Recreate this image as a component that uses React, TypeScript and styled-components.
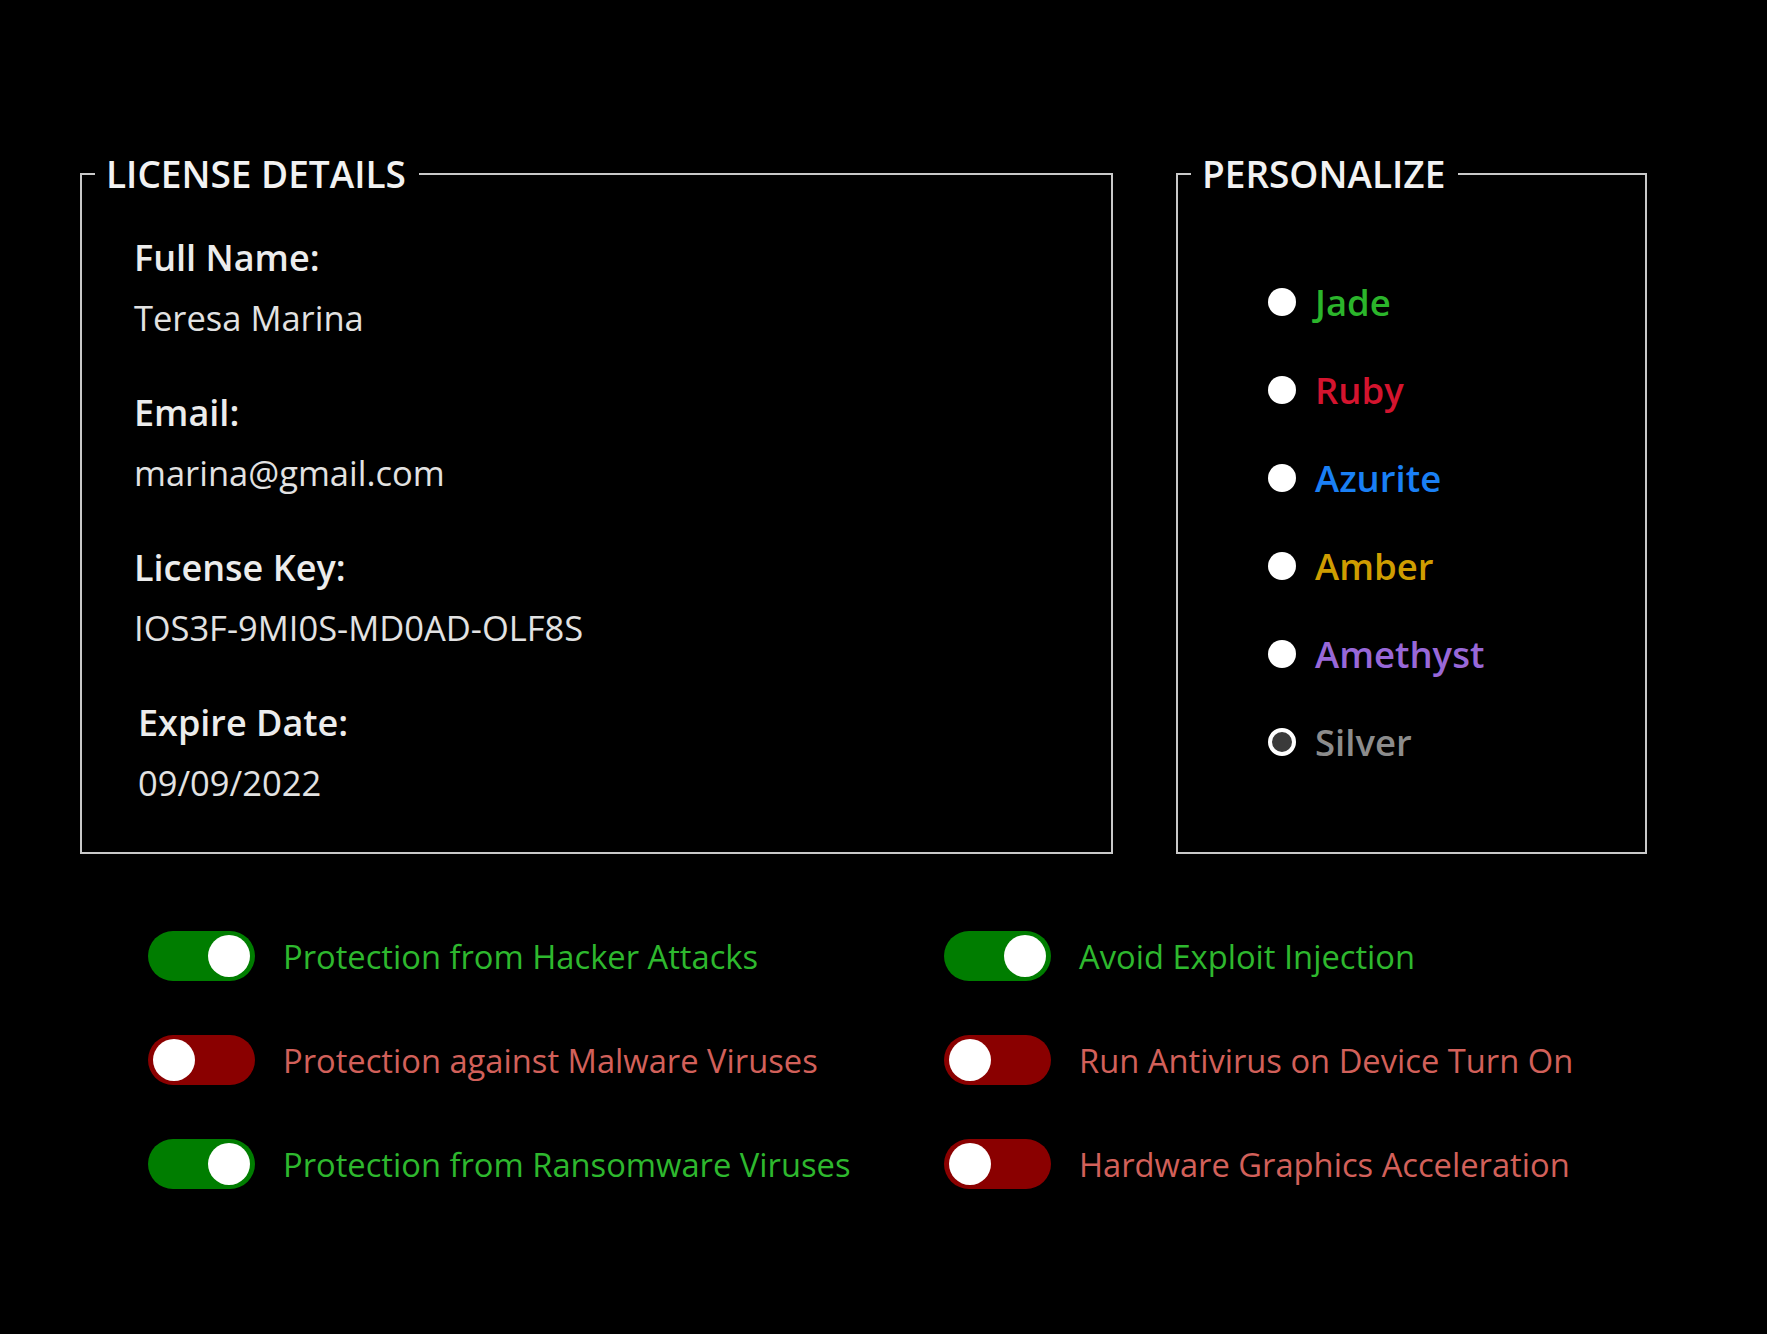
import styled, { createGlobalStyle } from 'styled-components';

const GlobalStyle = createGlobalStyle`
  html, body {
    margin: 0;
    padding: 0;
    background: #000;
  }

  body {
    font-family: 'Open Sans', 'Noto Sans', sans-serif;
    color: #e6e6e6;
  }
`;

const LICENSE_FIELDS = [
  { label: 'Full Name:', value: 'Teresa Marina' },
  { label: 'Email:', value: 'marina@gmail.com' },
  { label: 'License Key:', value: 'IOS3F-9MI0S-MD0AD-OLF8S' },
  { label: 'Expire Date:', value: '09/09/2022', shifted: true },
];

const THEMES = [
  { name: 'Jade', color: '#2bb52b' },
  { name: 'Ruby', color: '#d4142e' },
  { name: 'Azurite', color: '#1a80f5' },
  { name: 'Amber', color: '#cf9d00' },
  { name: 'Amethyst', color: '#9868d8' },
  { name: 'Silver', color: '#8c8c8c', checked: true },
];

const OPTIONS = [
  { label: 'Protection from Hacker Attacks', on: true },
  { label: 'Avoid Exploit Injection', on: true },
  { label: 'Protection against Malware Viruses', on: false },
  { label: 'Run Antivirus on Device Turn On', on: false },
  { label: 'Protection from Ransomware Viruses', on: true },
  { label: 'Hardware Graphics Acceleration', on: false },
];

export default function App() {
  return (
    <>
      <GlobalStyle />
      <Page>
        <Panels>
          <LicenseBox>
            <Legend>LICENSE DETAILS</Legend>
            <FieldList>
              {LICENSE_FIELDS.map((field) => (
                <Field key={field.label} $shifted={field.shifted}>
                  <FieldLabel>{field.label}</FieldLabel>
                  <FieldValue>{field.value}</FieldValue>
                </Field>
              ))}
            </FieldList>
          </LicenseBox>

          <PersonalizeBox>
            <Legend>PERSONALIZE</Legend>
            <RadioList>
              {THEMES.map((theme) => (
                <RadioRow key={theme.name}>
                  <RadioDot $checked={theme.checked} />
                  <RadioLabel $color={theme.color}>{theme.name}</RadioLabel>
                </RadioRow>
              ))}
            </RadioList>
          </PersonalizeBox>
        </Panels>

        <OptionsGrid>
          {OPTIONS.map((option) => (
            <OptionRow key={option.label}>
              <Toggle $on={option.on}>
                <Knob $on={option.on} />
              </Toggle>
              <OptionLabel $on={option.on}>{option.label}</OptionLabel>
            </OptionRow>
          ))}
        </OptionsGrid>
      </Page>
    </>
  );
}

const Page = styled.main`
  width: 1767px;
  height: 1334px;
  box-sizing: border-box;
  padding: 153px 0 0 80px;
  background: #000;
`;

const Panels = styled.div`
  display: flex;
  align-items: stretch;
  gap: 63px;
`;

const Box = styled.fieldset`
  margin: 0;
  padding: 0 0 0 13px;
  box-sizing: border-box;
  border: 2px solid #c9c9c9;
`;

const LicenseBox = styled(Box)`
  width: 1033px;
`;

const PersonalizeBox = styled(Box)`
  width: 471px;
`;

const Legend = styled.legend`
  padding: 0 13px 0 11px;
  font-size: 37px;
  line-height: 42px;
  font-weight: 600;
  color: #f2f2f2;
`;

const FieldList = styled.div`
  display: flex;
  flex-direction: column;
  gap: 49px;
  padding: 40px 0 46px 39px;
`;

const Field = styled.div<{ $shifted?: boolean }>`
  display: flex;
  flex-direction: column;
  gap: 14px;
  padding-left: ${({ $shifted }) => ($shifted ? '4px' : '0')};
`;

const FieldLabel = styled.div`
  font-size: 36px;
  line-height: 46px;
  font-weight: 600;
  color: #ececec;
`;

const FieldValue = styled.div`
  font-size: 34.5px;
  line-height: 46px;
  font-weight: 400;
  color: #e2e2e2;
`;

const RadioList = styled.div`
  display: flex;
  flex-direction: column;
  gap: 40px;
  padding: 83px 0 0 77px;
`;

const RadioRow = styled.div`
  display: flex;
  align-items: center;
  gap: 19px;
  height: 48px;
`;

const RadioDot = styled.span<{ $checked?: boolean }>`
  width: 28px;
  height: 28px;
  box-sizing: border-box;
  border-radius: 50%;
  flex-shrink: 0;
  background: ${({ $checked }) => ($checked ? '#3a3a3a' : '#fff')};
  border: ${({ $checked }) => ($checked ? '4px solid #fff' : 'none')};
`;

const RadioLabel = styled.span<{ $color: string }>`
  font-size: 36.5px;
  font-weight: 600;
  color: ${({ $color }) => $color};
`;

const OptionsGrid = styled.div`
  display: grid;
  grid-template-columns: 796px 1fr;
  row-gap: 54px;
  margin-top: 77px;
  padding-left: 68px;
`;

const OptionRow = styled.div`
  display: flex;
  align-items: center;
  gap: 28px;
  height: 50px;
`;

const Toggle = styled.span<{ $on: boolean }>`
  position: relative;
  width: 107px;
  height: 50px;
  border-radius: 25px;
  flex-shrink: 0;
  background: ${({ $on }) => ($on ? '#007d00' : '#8a0000')};
`;

const Knob = styled.span<{ $on: boolean }>`
  position: absolute;
  top: 4px;
  left: ${({ $on }) => ($on ? '60px' : '5px')};
  width: 42px;
  height: 42px;
  border-radius: 50%;
  background: #fff;
`;

const OptionLabel = styled.span<{ $on: boolean }>`
  font-size: 32.7px;
  font-weight: 500;
  color: ${({ $on }) => ($on ? '#2eb82e' : '#d2605a')};
`;
